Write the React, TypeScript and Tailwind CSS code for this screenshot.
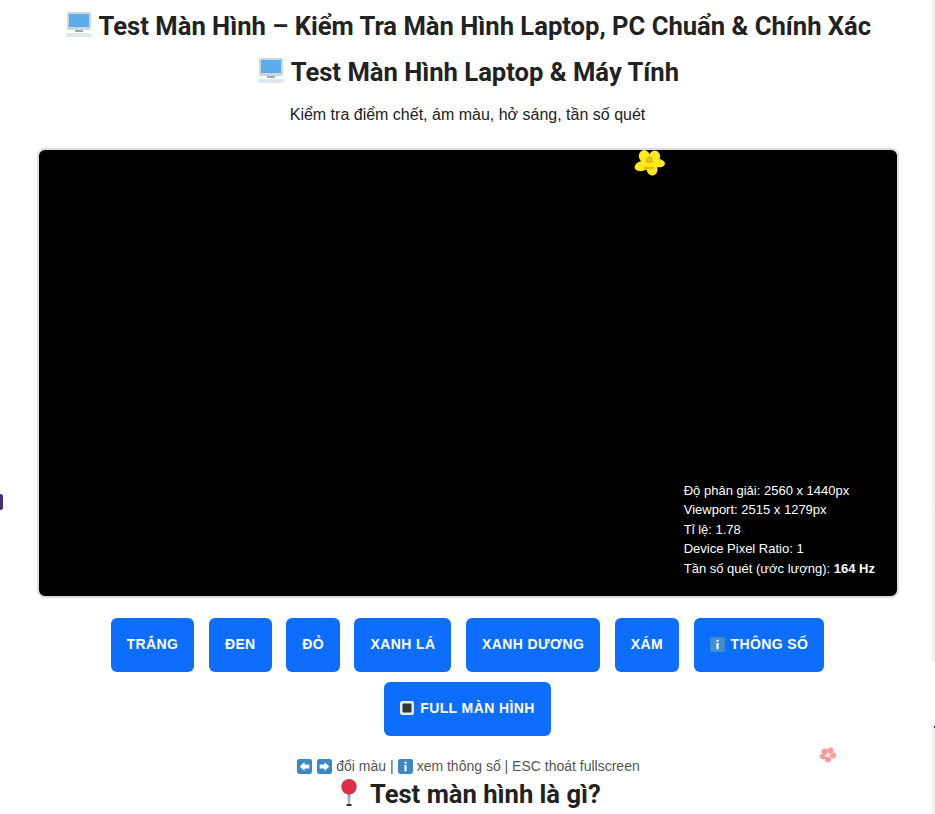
function Monitor() {
  return (
    <svg width="26" height="26" viewBox="0 0 26 26" className="mr-[1px] inline-block align-[-3px]" aria-hidden="true">
      <rect x="1" y="0" width="24" height="18" rx="2" fill="#ccd6dd" />
      <rect x="3" y="2" width="20" height="13" fill="#5dadec" />
      <rect x="9" y="18" width="8" height="2" fill="#99aab5" />
      <rect x="0" y="21" width="26" height="4" rx="2" fill="#e1e8ed" />
    </svg>
  );
}

function Flower() {
  return (
    <svg width="32" height="28" viewBox="0 0 32 28" aria-hidden="true">
      <g fill="#ffea1f">
        <ellipse cx="10.5" cy="7.5" rx="5.5" ry="6.5" transform="rotate(-20 10.5 7.5)" />
        <ellipse cx="20.5" cy="7.5" rx="5.5" ry="6" transform="rotate(15 20.5 7.5)" />
        <ellipse cx="24" cy="14" rx="7" ry="4.2" transform="rotate(8 24 14)" />
        <ellipse cx="18" cy="20" rx="5.5" ry="6.5" transform="rotate(-15 18 20)" />
        <ellipse cx="8" cy="17" rx="7.5" ry="5" transform="rotate(-15 8 17)" />
        <circle cx="15.5" cy="13" r="7" />
      </g>
      <ellipse cx="15" cy="19" rx="6" ry="1.5" fill="#e6c400" />
      <circle cx="15.5" cy="11" r="3.5" fill="#f0b90f" />
    </svg>
  );
}

function Blossom() {
  return (
    <svg width="16" height="16" viewBox="0 0 16 16" aria-hidden="true">
      <g fill="#ff9a9e">
        <circle cx="4.5" cy="4.5" r="3" />
        <circle cx="10.5" cy="3.5" r="3" />
        <circle cx="13" cy="8.5" r="3" />
        <circle cx="8" cy="12.5" r="3" />
        <circle cx="3" cy="9.5" r="3" />
      </g>
      <path d="M4 9 L12 6.5" stroke="#ffd2b8" strokeWidth="1.2" />
    </svg>
  );
}

function KeyIcon({ kind, muted }: { kind: "left" | "right" | "info"; muted?: boolean }) {
  return (
    <svg width="15" height="15" viewBox="0 0 14 14" className="inline-block shrink-0" aria-hidden="true">
      <rect width="14" height="14" rx="2" fill={muted ? "#3f8fd0" : "#3b88c3"} />
      {kind === "left" && <path d="M2.5 7 7 2.8V5.2h4.5v3.6H7v2.4z" fill="#fff" />}
      {kind === "right" && <path d="M11.5 7 7 2.8V5.2H2.5v3.6H7v2.4z" fill="#fff" />}
      {kind === "info" && <path d="M6 2.5h2v2H6zM6 5.5h2v6H6z" fill="#fff" />}
    </svg>
  );
}

function StopIcon() {
  return (
    <svg width="14" height="14" viewBox="0 0 14 14" className="inline-block shrink-0" aria-hidden="true">
      <rect width="14" height="14" rx="2" fill="#e6ebef" />
      <rect x="2.5" y="2.5" width="9" height="9" rx="1" fill="#31373d" />
    </svg>
  );
}

function Pin() {
  return (
    <svg width="26" height="28" viewBox="0 0 26 28" className="mr-[2px] inline-block align-[-4px]" aria-hidden="true">
      <path d="M11 12h4L13.7 26h-1.4z" fill="#99aab5" />
      <rect x="10.5" y="25" width="5" height="2" fill="#31373d" />
      <circle cx="13" cy="7.7" r="7.7" fill="#dd2e44" />
    </svg>
  );
}

const buttons = ["TRẮNG", "ĐEN", "ĐỎ", "XANH LÁ", "XANH DƯƠNG", "XÁM"];
const btn =
  "h-[54px] rounded-md bg-[#0d6efd] px-4 pb-[2px] text-sm font-bold tracking-[0.4px] text-white flex items-center gap-[6px]";

export default function App() {
  return (
    <div className="relative h-[814px] overflow-hidden bg-white font-['Liberation_Sans',Arial,sans-serif] text-[#222]">
      <div className="mx-auto flex w-[860px] flex-col items-center">
        <h1 className="mt-[3px] w-[935px] pl-[2px] text-center font-['Roboto',sans-serif] text-[25.6px] leading-[46px] font-bold whitespace-nowrap text-[#222]">
          <Monitor /> Test Màn Hình – Kiểm Tra Màn Hình Laptop, PC Chuẩn &amp; Chính Xác
        </h1>
        <h2 className="pl-[2px] font-['Roboto',sans-serif] text-[25.6px] leading-[46px] font-bold text-[#222]">
          <Monitor /> Test Màn Hình Laptop &amp; Máy Tính
        </h2>
        <p className="mt-[11px] text-base leading-[18px] text-[#222]">Kiểm tra điểm chết, ám màu, hở sáng, tần số quét</p>
        <div className="relative mt-[24px] -ml-[0.5px] h-[450px] w-[862px] self-start rounded-lg border-2 border-[#dddddd] bg-black">
          <div className="absolute right-[22px] bottom-[18px] text-[13px] leading-[19.5px] font-normal text-white">
            <div>Độ phân giải: 2560 x 1440px</div>
            <div>Viewport: 2515 x 1279px</div>
            <div>Tỉ lệ: 1.78</div>
            <div>Device Pixel Ratio: 1</div>
            <div>
              Tần số quét (ước lượng): <b>164 Hz</b>
            </div>
          </div>
        </div>
        <div className="mt-[20px] flex w-[860px] flex-wrap justify-center gap-x-[14.5px] gap-y-[10px]">
          {buttons.map((b) => (
            <button key={b} className={btn}>
              {b}
            </button>
          ))}
          <button className={btn}>
            <KeyIcon kind="info" muted /> THÔNG SỐ
          </button>
          <button className={btn}>
            <StopIcon /> FULL MÀN HÌNH
          </button>
        </div>
        <p className="mt-[21px] flex items-center gap-1 pl-[2px] text-sm leading-[18px] text-[#555]">
          <span className="flex gap-[5px]">
            <KeyIcon kind="left" />
            <KeyIcon kind="right" />
          </span>
          đổi màu | <KeyIcon kind="info" /> xem thông số | ESC thoát fullscreen
        </p>
        <h2 className="mt-[1px] pl-[2px] font-['Roboto',sans-serif] text-[25.6px] leading-[36px] font-bold text-[#222]">
          <Pin /> Test màn hình là gì?
        </h2>
      </div>
      <div className="absolute top-[149px] left-[634px]">
        <Flower />
      </div>
      <div className="absolute top-[747px] left-[820px]">
        <Blossom />
      </div>
      <div className="absolute top-[494px] -left-[2px] h-[16px] w-[5px] rounded-full bg-[#4b2a7b]" />
      <div className="absolute top-0 right-0 h-[661px] w-[5px] bg-gradient-to-r from-transparent to-[#ececec]" />
      <div className="absolute top-[728px] right-0 bottom-0 w-[5px] bg-gradient-to-r from-transparent to-[#ececec]" />
      <div className="absolute top-[726px] right-0 h-[2px] w-[1px] bg-[#b00020]" />
    </div>
  );
}
